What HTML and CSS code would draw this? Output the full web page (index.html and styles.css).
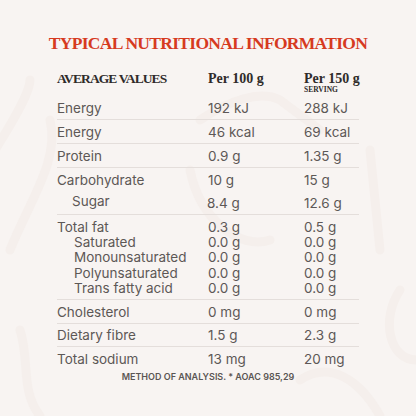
FILE: index.html
```html
<!DOCTYPE html>
<html>
<head>
<meta charset="utf-8">
<link rel="stylesheet" href="styles.css">
</head>
<body>
<div class="page">
  <svg class="bg" width="416" height="416" viewBox="0 0 416 416" aria-hidden="true">
    <g fill="none" stroke="#f5efec" stroke-width="9" stroke-linecap="round" stroke-linejoin="round">
      <path d="M-5 150 C 20 110, 30 90, 30 80"/>
      <path d="M10 250 C 30 200, 60 160, 50 120"/>
      <path d="M200 120 C 230 100, 260 90, 280 100 L 320 130"/>
      <path d="M190 170 C 200 220, 240 250, 270 240"/>
      <path d="M370 150 L 380 250"/>
      <path d="M400 290 C 380 320, 390 360, 416 360"/>
      <path d="M20 330 C 30 360, 20 390, 40 416"/>
      <path d="M300 380 C 330 360, 360 380, 380 416"/>
    </g>
  </svg>
  <main class="card">
    <h1 class="title">TYPICAL NUTRITIONAL INFORMATION</h1>
    <div class="table">
      <div class="head">
        <div class="hcell caps">AVERAGE VALUES</div>
        <div class="hcell">Per 100 g</div>
        <div class="hcell">Per 150 g<span class="sub">SERVING</span></div>
      </div>
      <div class="group">
        <div class="row"><span>Energy</span><span>192 kJ</span><span>288 kJ</span></div>
      </div>
      <div class="group">
        <div class="row"><span>Energy</span><span>46 kcal</span><span>69 kcal</span></div>
      </div>
      <div class="group">
        <div class="row"><span>Protein</span><span>0.9 g</span><span>1.35 g</span></div>
      </div>
      <div class="group carb">
        <div class="row"><span>Carbohydrate</span><span>10 g</span><span>15 g</span></div>
        <div class="row sugar"><span class="ind">Sugar</span><span class="v2">8.4 g</span><span class="v2">12.6 g</span></div>
      </div>
      <div class="group fat">
        <div class="row"><span>Total fat</span><span>0.3 g</span><span>0.5 g</span></div>
        <div class="row tight"><span class="ind2">Saturated</span><span>0.0 g</span><span>0.0 g</span></div>
        <div class="row tight"><span class="ind2">Monounsaturated</span><span>0.0 g</span><span>0.0 g</span></div>
        <div class="row tight"><span class="ind2">Polyunsaturated</span><span>0.0 g</span><span>0.0 g</span></div>
        <div class="row tight"><span class="ind2">Trans fatty acid</span><span>0.0 g</span><span>0.0 g</span></div>
      </div>
      <div class="group sm">
        <div class="row"><span>Cholesterol</span><span>0 mg</span><span>0 mg</span></div>
      </div>
      <div class="group sm">
        <div class="row"><span>Dietary fibre</span><span>1.5 g</span><span>2.3 g</span></div>
      </div>
      <div class="group sm last">
        <div class="row"><span>Total sodium</span><span>13 mg</span><span>20 mg</span></div>
      </div>
    </div>
    <p class="note">METHOD OF ANALYSIS. * AOAC 985,29</p>
  </main>
</div>
</body>
</html>
```

FILE: styles.css
```css
* { box-sizing: border-box; }
html, body { margin: 0; padding: 0; }
body {
  width: 416px;
  height: 416px;
  background: #f8f4f2;
  overflow: hidden;
}
.page {
  position: relative;
  width: 416px;
  height: 416px;
}
.bg {
  position: absolute;
  left: 0;
  top: 0;
}
.card {
  position: relative;
  padding-top: 33px;
  display: flex;
  flex-direction: column;
  align-items: center;
}
.title {
  margin: 0;
  font-family: "Liberation Serif", serif;
  font-weight: bold;
  font-size: 17.5px;
  line-height: 20px;
  letter-spacing: -0.7px;
  color: #d63a1f;
}
.table {
  width: 302px;
  margin-top: 18px;
  font-family: Inter, "Liberation Sans", sans-serif;
  font-size: 13.5px;
  color: #5d5856;
}
.head, .row {
  display: grid;
  grid-template-columns: 151px 96px 1fr;
  white-space: nowrap;
}
.head {
  height: 25px;
  padding-top: 1px;
  font-family: "Liberation Serif", serif;
  font-weight: bold;
  font-size: 14px;
  line-height: 14px;
  color: #2f2b2a;
}
.hcell { display: flex; flex-direction: column; }
.caps { font-size: 13.5px; letter-spacing: -0.9px; }
.sub {
  font-size: 7.5px;
  line-height: 8px;
}
.group {
  border-bottom: 1px solid #e4dedb;
  padding: 4px 0 3px;
}
.group.sm { padding: 3.5px 0 3px; }
.group.last { border-bottom: none; }
.row { line-height: 16px; }
.carb .row.sugar { margin-top: 5px; padding-bottom: 2px; }
.ind { padding-left: 15px; }
.v2 { position: relative; top: 2px; }
.sugar span:nth-child(2) { margin-left: -1px; }
.fat .row.tight { line-height: 15.25px; }
.ind2 { padding-left: 17px; }
.note {
  margin: 1px 0 0;
  font-family: Inter, "Liberation Sans", sans-serif;
  font-weight: 600;
  font-size: 9px;
  line-height: 12px;
  color: #5b5654;
}
```
